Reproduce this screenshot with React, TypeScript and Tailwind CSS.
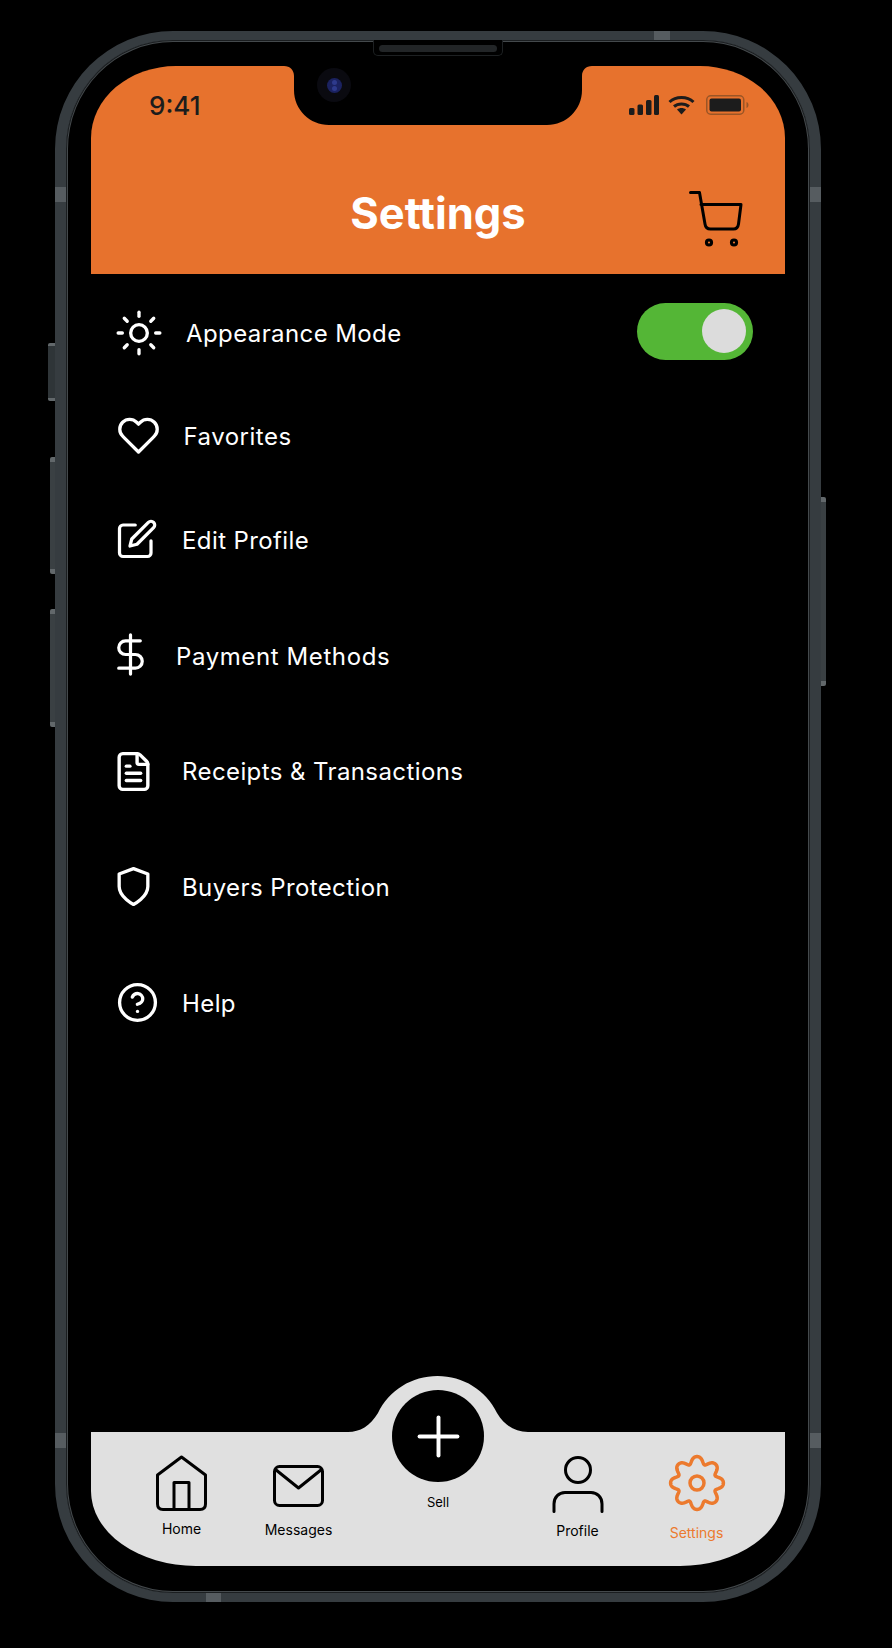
import { Sun, DollarSign, FileText, CircleHelp, Plus } from "lucide-react";
import type { ReactNode } from "react";

const inter = "font-['Inter',sans-serif]";

// wavy 8 lobe gear outline, centered on 0 0
const gearPath = (() => {
  const pts: string[] = [];
  for (let i = 0; i < 360; i++) {
    const a = (i / 360) * Math.PI * 2;
    const r = 23.5 + 3.4 * Math.cos(8 * a) - 0.5 * Math.cos(16 * a);
    pts.push(`${(r * Math.cos(a)).toFixed(2)} ${(r * Math.sin(a)).toFixed(2)}`);
  }
  return `M${pts.join("L")}Z`;
})();

const Row = ({
  icon,
  box,
  label,
  labelClass,
  className,
  children,
}: {
  icon: ReactNode;
  box: string;
  label: string;
  labelClass: string;
  className: string;
  children?: ReactNode;
}) => (
  <div className={`flex h-[56px] items-center ${className}`}>
    <div className={`flex shrink-0 justify-center ${box}`}>{icon}</div>
    <span className={`text-[24px] leading-[32px] text-white ${labelClass}`}>{label}</span>
    {children}
  </div>
);

const NavLabel = ({ children, className }: { children: ReactNode; className: string }) => (
  <span className={`text-[14px] leading-[18px] font-normal ${className}`}>{children}</span>
);

export default function App() {
  return (
    <div className={`min-h-[1648px] w-[892px] overflow-hidden bg-black pt-[31px] pl-[55px] ${inter}`}>
      {/* Phone frame */}
      <div className="relative h-[1571px] w-[766px] rounded-[118px] border-x-[11px] border-y-[9px] border-[#363c40] px-[25px] pt-[26px] pb-[27px] shadow-[inset_0_0_0_1px_#1a1d1f,inset_0_0_0_2px_#44494c]">
        {/* side buttons */}
        <div className="absolute top-[303px] -left-[18px] h-[58px] w-[7px] rounded-l-[2px] border-y-[3px] border-[#62686b] bg-[#2f3538]" />
        <div className="absolute top-[417px] -left-[16px] h-[117px] w-[5px] rounded-l-[2px] border-y-[5px] border-[#62686b] bg-[#3a4043]" />
        <div className="absolute top-[569px] -left-[16px] h-[118px] w-[5px] rounded-l-[2px] border-y-[5px] border-[#62686b] bg-[#3a4043]" />
        <div className="absolute top-[457px] -right-[16px] h-[189px] w-[5px] rounded-r-[2px] border-y-[5px] border-[#62686b] bg-[#3a4043]" />
        {/* antenna bands */}
        <div className="absolute top-[147px] -left-[11px] h-[15px] w-[11px] bg-[#565c60]" />
        <div className="absolute top-[147px] -right-[11px] h-[15px] w-[11px] bg-[#565c60]" />
        <div className="absolute top-[1393px] -left-[11px] h-[15px] w-[11px] bg-[#565c60]" />
        <div className="absolute top-[1393px] -right-[11px] h-[15px] w-[11px] bg-[#565c60]" />
        <div className="absolute -top-[9px] left-[588px] h-[9px] w-[16px] bg-[#565c60]" />
        <div className="absolute -bottom-[9px] left-[140px] h-[9px] w-[15px] bg-[#565c60]" />

        {/* Speaker */}
        <div className="absolute top-0 left-[307px] z-20 h-[16px] w-[130px] rounded-b-[5px] border-x border-b border-[#1d2022] bg-black px-[5px] pt-[5px]">
          <div className="h-[7px] rounded-full bg-[#222527]" />
        </div>

        <div className="flex h-full flex-col">
          {/* Header */}
          <div className="relative h-[208px] shrink-0 rounded-tl-[85px_72px] rounded-tr-[85px_72px] bg-[#e7722d] pt-[28px]">
            {/* Notch */}
            <svg className="absolute top-0 left-[192.5px]" width="308" height="59" viewBox="0 0 308 59">
              <path d="M0 0H308C302 0 298 4 298 10V24C298 44 282 59 263 59H45C26 59 10 44 10 24V10C10 4 6 0 0 0Z" fill="#000" />
            </svg>
            <div className="absolute top-[2px] left-[226px] flex h-[34px] w-[34px] items-center justify-center rounded-full bg-[#0a0a10]">
              <div className="flex h-[15px] w-[15px] flex-col items-center justify-center gap-[1px] rounded-full bg-[#1b2260]">
                <div className="h-[5px] w-[5px] rounded-full bg-[#2e3a8c]" />
                <div className="h-[5px] w-[5px] rounded-full bg-[#2e3a8c]" />
              </div>
            </div>

            {/* Status bar */}
            <div className="flex h-[22px] items-center justify-between pr-[36px] pl-[58px]">
              <span className="pt-[2px] text-[26px] leading-[22px] font-medium text-[#1c1c1c]">9:41</span>
              <div className="flex items-center">
                <svg width="30" height="20" viewBox="0 0 30 20" fill="#1c1c1c">
                  <rect x="0" y="13" width="5.5" height="7" rx="1.5" />
                  <rect x="8.5" y="9.5" width="5.5" height="10.5" rx="1.5" />
                  <rect x="17" y="5" width="5.5" height="15" rx="1.5" />
                  <rect x="25" y="0" width="5" height="20" rx="1.5" />
                </svg>
                <svg className="ml-[9px]" width="27" height="20" viewBox="0 0 27 20" fill="none" stroke="#1c1c1c" strokeWidth="3">
                  <path d="M1.500 7C8 1 19 1 25.500 7" />
                  <path d="M6 11.500C10 8 17 8 21 11.500" />
                  <path d="M9 14.500L13.500 19.500L18 14.500C15.500 12.500 11.500 12.500 9 14.500Z" fill="#1c1c1c" stroke="none" />
                </svg>
                <svg className="ml-[11px]" width="43" height="20" viewBox="0 0 43 20">
                  <rect x="0.750" y="0.750" width="37" height="18.500" rx="4" fill="none" stroke="#9a5526" strokeWidth="1.500" />
                  <rect x="3.500" y="3.500" width="31.500" height="13" rx="2" fill="#1c1c1c" />
                  <path d="M40.500 7V13C42 12.500 42.500 11 42.500 10C42.500 9 42 7.500 40.500 7Z" fill="#9a5526" />
                </svg>
              </div>
            </div>

            {/* Title + cart */}
            <div className="mt-[75px] grid grid-cols-[1fr_auto_1fr] items-start">
              <div />
              <h1 className="text-[43.500px] leading-[44px] font-bold text-white">Settings</h1>
              <svg className="mr-[42px] justify-self-end" width="54" height="57" viewBox="0 0 54 57" fill="none" stroke="#000" strokeWidth="3" strokeLinecap="round" strokeLinejoin="round">
                <path d="M1.500 1.500H10.500L16 33C16.500 36.500 18.500 38 21.500 38H44.500C47.500 38 49 36.500 49.500 33L52 13.500H12" />
                <circle cx="20" cy="51.500" r="2.600" fill="#e7722d" strokeWidth="3" />
                <circle cx="45" cy="51.500" r="2.600" fill="#e7722d" strokeWidth="3" />
              </svg>
            </div>
          </div>

          {/* Settings list */}
          <div className="flex-1 pl-[22px]">
            <Row
              className="mt-[32px]"
              box="-mt-[3px] w-[51px]"
              label="Appearance Mode"
              labelClass="ml-[22px] tracking-[0.4px]"
              icon={<Sun size={50} strokeWidth={1.6} color="#fff" className="shrink-0" />}
            >
              <div className="mr-[32px] -mt-[6px] ml-auto flex h-[57px] w-[116px] items-center justify-end rounded-full bg-[#54b636] pr-[7px]">
                <div className="h-[44px] w-[44px] rounded-full bg-[#dcdcdc]" />
              </div>
            </Row>
            <Row
              className="mt-[47px]"
              box="-mt-[4px] ml-[1px] w-[49px]"
              label="Favorites"
              labelClass="ml-[20.500px] tracking-[0.5px]"
              icon={
                <svg className="shrink-0" width="43" height="43" viewBox="0 0 24 24" fill="none" stroke="#fff" strokeWidth="1.850" strokeLinecap="round" strokeLinejoin="round">
                  <path d="M20.840 4.610a5.500 5.500 0 0 0-7.780 0L12 5.670l-1.060-1.060a5.500 5.500 0 0 0-7.780 7.780l1.060 1.060L12 21.230l7.780-7.780 1.060-1.060a5.500 5.500 0 0 0 0-7.780z" />
                </svg>
              }
            />
            <Row
              className="mt-[48px]"
              box="-mt-[4px] w-[48px]"
              label="Edit Profile"
              labelClass="ml-[21px] tracking-[0.4px]"
              icon={
                <svg className="shrink-0" width="42" height="42" viewBox="0 0 24 24" fill="none" stroke="#fff" strokeWidth="1.850" strokeLinecap="round" strokeLinejoin="round">
                  <path d="M11 4H4a2 2 0 0 0-2 2v14a2 2 0 0 0 2 2h14a2 2 0 0 0 2-2v-7" />
                  <path d="M18.500 2.500a2.121 2.121 0 0 1 3 3L12 15l-4 1 1-4 9.500-9.500z" />
                </svg>
              }
            />
            <Row
              className="mt-[60px]"
              box="-mt-[5px] w-[34px]"
              label="Payment Methods"
              labelClass="ml-[29px] tracking-[0.6px]"
              icon={<DollarSign size={47} strokeWidth={1.65} color="#fff" className="shrink-0" />}
            />
            <Row
              className="mt-[59px]"
              box="-mt-[2px] w-[41px]"
              label="Receipts & Transactions"
              labelClass="ml-[28px] tracking-[0.4px]"
              icon={<FileText size={43} strokeWidth={1.9} color="#fff" className="shrink-0" />}
            />
            <Row
              className="mt-[60px]"
              box="-mt-[4px] w-[41px]"
              label="Buyers Protection"
              labelClass="ml-[28px] tracking-[0.4px]"
              icon={
                <svg className="shrink-0" width="43" height="43" viewBox="0 0 24 24" fill="none" stroke="#fff" strokeWidth="1.850" strokeLinecap="round" strokeLinejoin="round">
                  <path d="M12 22s8-4 8-10V5l-8-3-8 3v7c0 6 8 10 8 10z" />
                </svg>
              }
            />
            <Row
              className="mt-[60px]"
              box="-mt-[4px] w-[48px]"
              label="Help"
              labelClass="ml-[21px] tracking-[0.4px]"
              icon={<CircleHelp size={43} strokeWidth={1.85} color="#fff" className="shrink-0" />}
            />
          </div>

          {/* Bottom nav */}
          <div className="relative flex h-[134px] shrink-0 rounded-br-[105px_75px] rounded-bl-[105px_75px] bg-[#e0e0e0] pl-[34.500px]">
            <svg className="absolute -top-[56px] left-[256.5px]" width="180" height="57" viewBox="0 0 180 57">
              <path d="M0 57V56C12 56 22 50 30 37C41 14 64 0 89.500 0C115 0 138 14 149 37C157 50 167 56 180 56V57Z" fill="#e0e0e0" />
            </svg>

            <div className="flex w-[112px] flex-col items-center pt-[23px]">
              <svg width="51" height="56" viewBox="0 0 51 56" fill="none" stroke="#000" strokeWidth="3" strokeLinejoin="round">
                <path d="M25.500 2L49.500 20V49C49.500 52.500 47.500 54.500 44 54.500H7C3.500 54.500 1.500 52.500 1.500 49V20Z" />
                <path d="M18 54.500V27.500H33V54.500" />
              </svg>
              <NavLabel className="mt-[9px] text-black">Home</NavLabel>
            </div>

            <div className="flex w-[122px] flex-col items-center pt-[33px]">
              <svg width="51" height="42" viewBox="0 0 51 42" fill="none" stroke="#000" strokeWidth="3" strokeLinejoin="round">
                <rect x="1.500" y="1.500" width="48" height="39" rx="5" />
                <path d="M2.500 4.500L25.500 23L48.500 4.500" />
              </svg>
              <NavLabel className="mt-[14px] text-black">Messages</NavLabel>
            </div>

            <div className="relative -mt-[42px] flex w-[157px] flex-col items-center">
              <div className="flex h-[92px] w-[92px] items-center justify-center rounded-full bg-black">
                <Plus size={65} strokeWidth={1.45} color="#fff" />
              </div>
              <span className="mt-[11px] text-[13px] leading-[18px] text-black">Sell</span>
            </div>

            <div className="flex w-[122px] flex-col items-center pt-[24px]">
              <svg width="52" height="57" viewBox="0 0 52 57" fill="none" stroke="#000" strokeWidth="3" strokeLinecap="round">
                <circle cx="26" cy="14" r="12.500" />
                <path d="M2 55.500V48C2 41 7 36.500 13 36.500H39C45 36.500 50 41 50 48V55.500" />
              </svg>
              <NavLabel className="mt-[9px] text-black">Profile</NavLabel>
            </div>

            <div className="flex w-[116px] flex-col items-center pt-[21px]">
              <svg width="60" height="60" viewBox="-30 -30 60 60" fill="none" stroke="#ec7a2e" strokeWidth="3.500">
                <path d={gearPath} />
                <circle cx="0" cy="0" r="7" />
              </svg>
              <NavLabel className="mt-[11px] text-[#ec7a2e]">Settings</NavLabel>
            </div>
          </div>
        </div>
      </div>
    </div>
  );
}
